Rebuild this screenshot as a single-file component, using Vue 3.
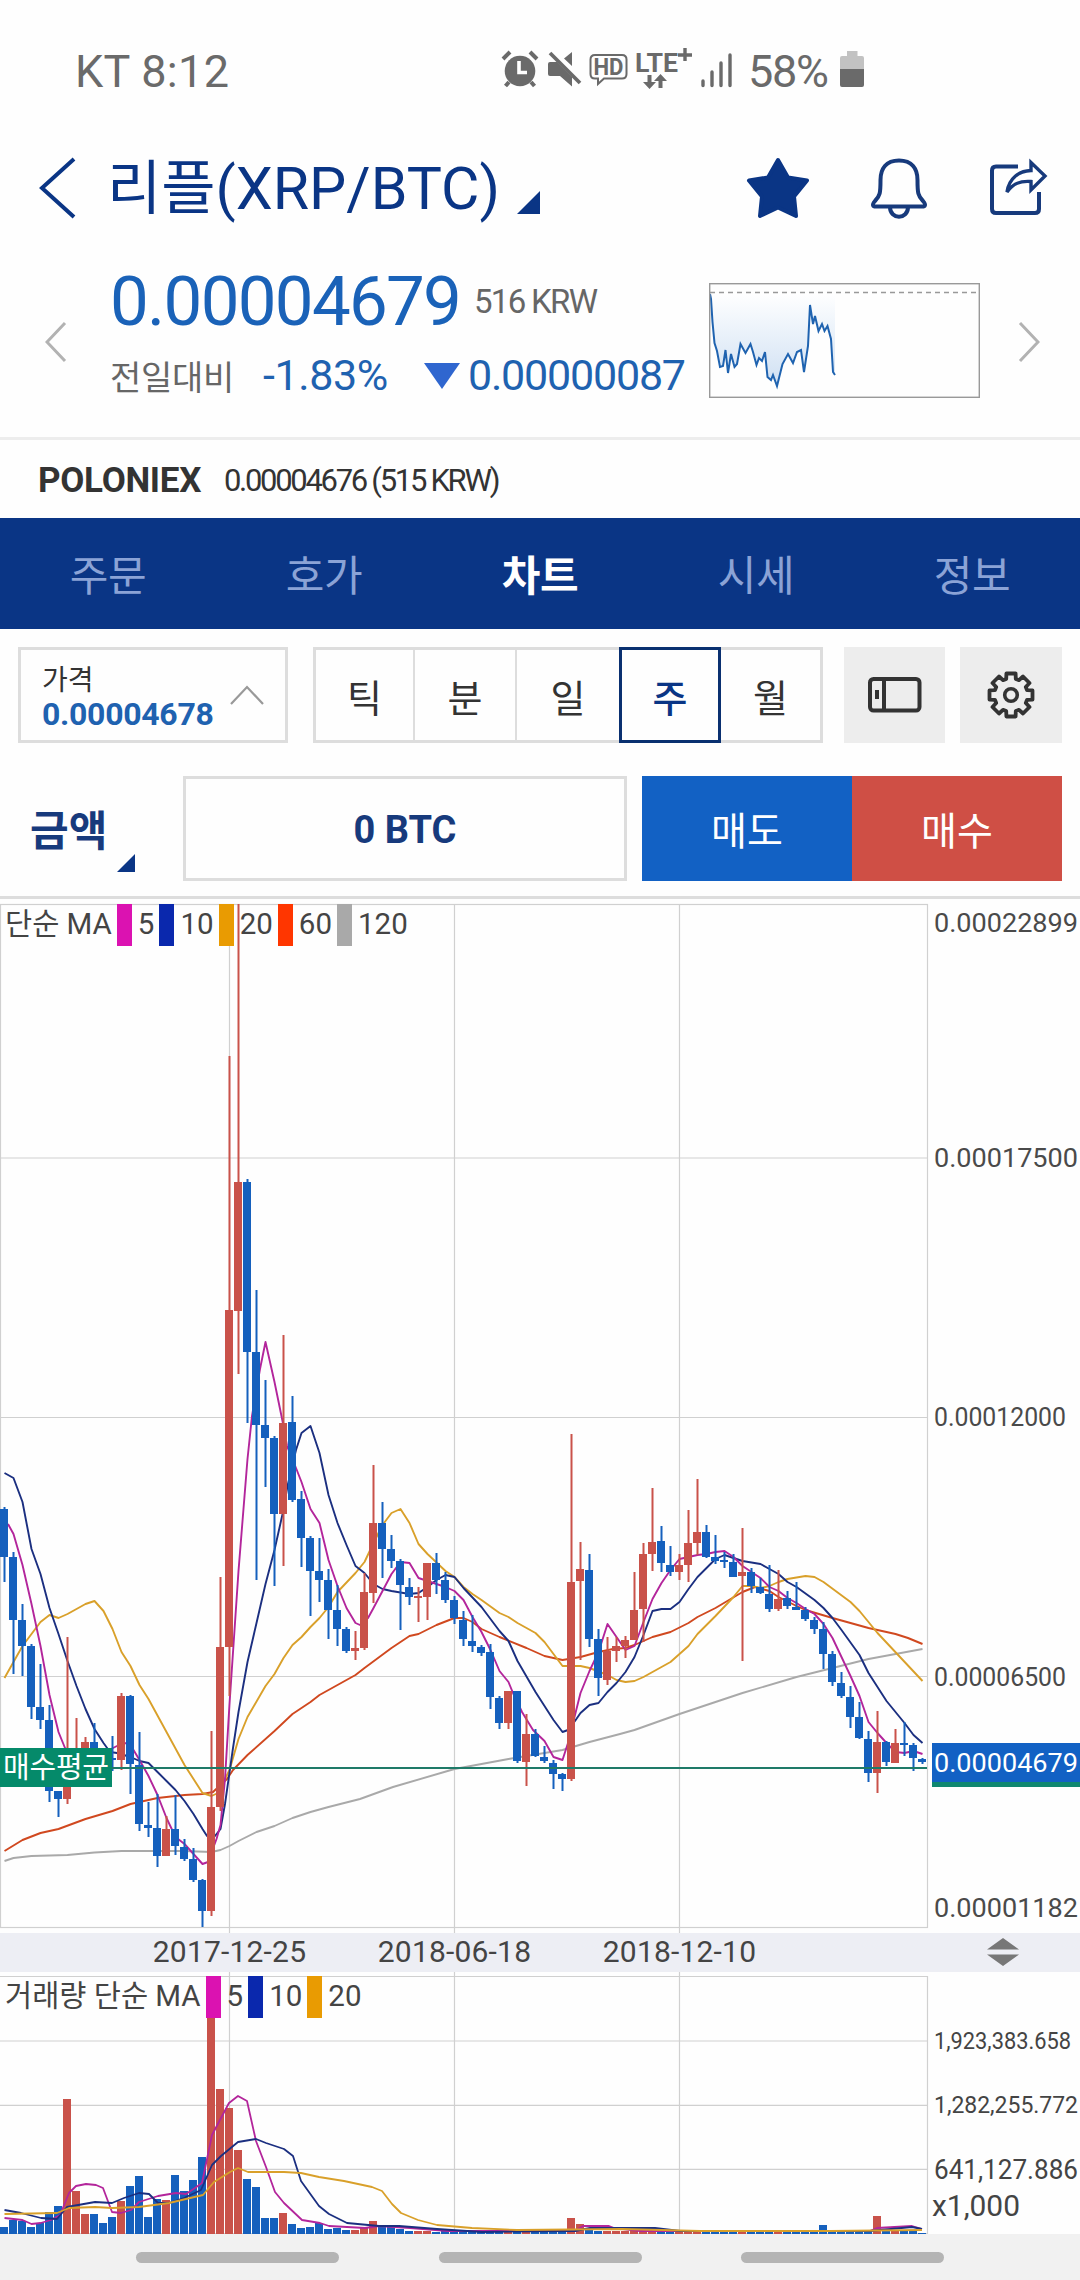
<template>
  <div class="screen">
    <div class="status-bar">
      <span class="status-time">KT 8:12</span>
      <div class="status-right">
        <svg class="ic-alarm" width="38" height="44" viewBox="0 0 38 44">
          <circle cx="19" cy="25" r="15.3" fill="#6a6a6a" />
          <path d="M2 13 L9 6 M29 6 L36 13" stroke="#6a6a6a" stroke-width="4" fill="none" />
          <path d="M8 36 L4.500 40 M30 36 L33.500 40" stroke="#6a6a6a" stroke-width="4" fill="none" />
          <path d="M18 15 V26.500 H26" stroke="#fff" stroke-width="3.600" fill="none" />
        </svg>
        <svg class="ic-mute" width="34" height="44" viewBox="0 0 34 44">
          <path d="M0 18 Q0 16 2 16 H9 L24 31 V40.500 L12 30 H2 Q0 30 0 28 Z M24 6 V20 L16 12.500 Z" fill="#6a6a6a" />
          <path d="M2 7 L32 37" stroke="#6a6a6a" stroke-width="3.800" />
        </svg>
        <svg class="ic-hd" width="40" height="44" viewBox="0 0 40 44">
          <path d="M6 9 H33 Q37.500 9 37.500 13.500 V28 Q37.500 32.500 33 32.500 H15 L9 38 V32.500 H6 Q1.500 32.500 1.500 28 V13.500 Q1.500 9 6 9 Z" fill="none" stroke="#6a6a6a" stroke-width="2" />
          <text x="4.500" y="29" textLength="30" lengthAdjust="spacingAndGlyphs" font-size="23" font-weight="700" fill="#6a6a6a">HD</text>
        </svg>
        <svg class="ic-lte" width="58" height="44" viewBox="0 0 58 44">
          <text x="0" y="25.500" textLength="43" lengthAdjust="spacingAndGlyphs" font-size="26" font-weight="700" fill="#6a6a6a">LTE</text>
          <path d="M43 9 H57 M50 2 V15" stroke="#6a6a6a" stroke-width="3.400" />
          <path d="M12.500 29 H16.500 V36 H21 L14.500 43 L8 36 H12.500 Z M23.500 42 H27.500 V35 H32 L25.500 28 L19 35 H23.500 Z" fill="#6a6a6a" />
        </svg>
        <svg class="ic-signal" width="32" height="44" viewBox="0 0 32 44">
          <path d="M2 35 V39.500 M11 26 V39.500 M20 17 V39.500 M29 9 V39.500" stroke="#6a6a6a" stroke-width="3.400" stroke-linecap="round" />
        </svg>
        <span class="status-battery">58%</span>
        <svg class="ic-battery" width="24" height="44" viewBox="0 0 24 44">
          <path d="M7 5 H17.500 V10 H22 Q24 10 24 12 V23 H0 V12 Q0 10 2 10 H7 Z" fill="#c2c2c2" />
          <path d="M0 23 H24 V39 Q24 41 22 41 H2 Q0 41 0 39 Z" fill="#6a6a6a" />
        </svg>
      </div>
    </div>

    <header class="title-bar">
      <svg class="back" width="40" height="64" viewBox="0 0 40 64">
        <path d="M36 3 L4 32 L36 61" fill="none" stroke="#0a3585" stroke-width="4" />
      </svg>
      <h1 class="title">리플(XRP/BTC)</h1>
      <span class="corner title-corner"></span>
      <div class="title-actions">
        <svg width="64" height="64" viewBox="0 0 64 64">
          <path d="M32 4 L42 21.500 L61 24.500 L48 40.500 L50 60 L32 51.500 L14 60 L16 40.500 L3 24.500 L22 21.500 Z" fill="#0a3585" stroke="#0a3585" stroke-width="4" stroke-linejoin="round" />
        </svg>
        <svg width="60" height="64" viewBox="0 0 60 64">
          <path d="M30 4.500 C17 4.500 11.500 13 11.500 24 C11.500 37 11 40 6 45 C2.500 49 4 50.500 7 50.500 H53 C56 50.500 57.500 49 54 45 C49 40 48.500 37 48.500 24 C48.500 13 43 4.500 30 4.500 Z" fill="none" stroke="#173a7c" stroke-width="4" />
          <path d="M21 51 C21 64 39 64 39 51" fill="none" stroke="#173a7c" stroke-width="4" />
        </svg>
        <svg width="62" height="64" viewBox="0 0 62 64">
          <path d="M30 10.500 H8 Q4 10.500 4 14.500 V53 Q4 57 8 57 H47 Q51 57 51 53 V36" fill="none" stroke="#173a7c" stroke-width="4" />
          <path d="M19 36 C21 22 31 15 43 14.500 V6.500 L57 20 L43 34 V25.500 C32 24.500 25 27.500 19 36 Z" fill="#fff" stroke="#173a7c" stroke-width="3.400" />
        </svg>
      </div>
    </header>

    <section class="summary">
      <svg class="arrow" width="22" height="42" viewBox="0 0 22 42">
        <path d="M20 2 L2 21 L20 40" fill="none" stroke="#b2b2b2" stroke-width="3" />
      </svg>
      <div class="figures">
        <div class="price-row">
          <span class="price">0.00004679</span>
          <span class="krw">516 KRW</span>
        </div>
        <div class="change-row">
          <span class="change-label">전일대비</span>
          <span class="change-rate">-1.83%</span>
          <span class="triangle-down"></span>
          <span class="change-value">0.00000087</span>
        </div>
      </div>
      <svg class="spark" width="271" height="115" viewBox="0 0 271 115">
        <defs>
          <linearGradient id="sparkFill" x1="0" y1="0" x2="0" y2="1">
            <stop offset="0" stop-color="#fff" />
            <stop offset="1" stop-color="#cfe0f3" />
          </linearGradient>
        </defs>
        <polygon :points="'1,10 ' + sparkLine + ' 126,10'" fill="url(#sparkFill)" />
        <polyline :points="sparkLine" fill="none" stroke="#1f63b0" stroke-width="2" />
        <path d="M1 9.500 H270" stroke="#999" stroke-width="1.400" stroke-dasharray="5 4" />
        <rect x="0.700" y="0.700" width="269.600" height="113.600" fill="none" stroke="#999" stroke-width="1.400" />
      </svg>
      <svg class="arrow" width="22" height="42" viewBox="0 0 22 42">
        <path d="M2 2 L20 21 L2 40" fill="none" stroke="#b2b2b2" stroke-width="3" />
      </svg>
    </section>

    <div class="exchange">
      <b class="exchange-name">POLONIEX</b>
      <span class="exchange-price">0.00004676 (515 KRW)</span>
    </div>

    <nav class="tabs">
      <a v-for="tab in tabs" :key="tab" class="tab" :class="{ active: tab === activeTab }" @click="activeTab = tab">{{ tab }}</a>
    </nav>

    <div class="toolbar">
      <div class="price-box">
        <div class="price-box-text">
          <span class="price-box-label">가격</span>
          <b class="price-box-value">0.00004678</b>
        </div>
        <svg width="36" height="22" viewBox="0 0 36 22">
          <path d="M2 20 L18 3 L34 20" fill="none" stroke="#999" stroke-width="2.200" />
        </svg>
      </div>
      <div class="periods">
        <button v-for="p in periods" :key="p" class="period" :class="{ selected: p === period }" @click="period = p">{{ p }}</button>
      </div>
      <button class="tool">
        <svg width="54" height="36" viewBox="0 0 54 36">
          <rect x="2" y="2" width="49.500" height="31.500" rx="3.500" fill="none" stroke="#333" stroke-width="4" />
          <path d="M16 2 V34" stroke="#333" stroke-width="4" />
          <rect x="7" y="13" width="4" height="9" fill="#333" />
        </svg>
      </button>
      <button class="tool">
        <svg width="50" height="50" viewBox="-25 -25 50 50">
          <path :d="gearPath" fill="none" stroke="#333" stroke-width="3.800" stroke-linejoin="round" />
          <circle r="6.300" fill="none" stroke="#333" stroke-width="3.600" />
        </svg>
      </button>
    </div>

    <div class="order-bar">
      <div class="amount">
        <b>금액</b>
        <span class="corner amount-corner"></span>
      </div>
      <div class="amount-input">0 BTC</div>
      <div class="order-buttons">
        <button class="sell">매도</button>
        <button class="buy">매수</button>
      </div>
    </div>

    <div class="price-chart">
      <svg width="1080" height="1033" viewBox="0 0 1080 1033">
        <g stroke="#d0d0d0" stroke-width="1.200" fill="none">
          <rect x="0.500" y="4.500" width="927" height="1023" />
          <path d="M0 258 H927 M0 517.500 H927 M0 776.500 H927" />
          <path d="M229.500 4 V1033 M454.500 4 V1033 M679.500 4 V1033" />
        </g>
        <polyline v-for="line in priceLines" :key="line.color" :points="line.points" :stroke="line.color" fill="none" stroke-width="1.900" stroke-linejoin="round" />
        <g v-for="(c, i) in candles" :key="i" :fill="c[0] ? '#c9524a' : '#1560bd'">
          <rect :x="i * 9 + 3.500" :y="c[1]" width="2" :height="c[4] - c[1]" />
          <rect :x="i * 9" :y="c[2]" width="8" :height="Math.max(c[3] - c[2], 2)" />
        </g>
        <path d="M112 868 H927" stroke="#1e7a68" stroke-width="2" />
        <rect x="0" y="848" width="112" height="39" fill="#058a6a" />
        <text x="3" y="878" font-size="29" textLength="106" fill="#fff">매수평균</text>
        <rect x="932" y="843" width="148" height="44" fill="#0f8770" />
        <rect x="932" y="843" width="148" height="39" fill="#1261c4" />
        <text v-for="l in priceLabels" :key="l.text" x="934" :y="l.y" :textLength="l.w" lengthAdjust="spacingAndGlyphs" font-size="26" :fill="l.current ? '#fff' : '#4a4a4a'">{{ l.text }}</text>
      </svg>
      <div class="legend">
        <span>단순 MA</span>
        <template v-for="m in priceLegend" :key="m.n">
          <i class="swatch" :style="{ background: m.color }"></i><span>{{ m.n }}</span>
        </template>
      </div>
    </div>

    <div class="date-axis">
      <span v-for="d in dates" :key="d" class="date">{{ d }}</span>
      <svg class="resizer" width="32" height="28" viewBox="0 0 32 28">
        <path d="M0 11.500 L16 0 L32 11.500 Z M0 16.500 L16 28 L32 16.500 Z" fill="#777" />
      </svg>
    </div>

    <div class="volume-chart">
      <svg width="1080" height="262" viewBox="0 72 1080 262">
        <g stroke="#d0d0d0" stroke-width="1.200" fill="none">
          <path d="M0 76.500 H927.500 V334 M0 333.500 H927" />
          <path d="M0 141 H927 M0 205.300 H927 M0 269.300 H927" />
          <path d="M229.500 72 V334 M454.500 72 V334 M679.500 72 V334" />
        </g>
        <rect v-for="(v, i) in volumes" :key="i" :x="i * 9" :y="334 - v" width="8" :height="v" :fill="candles[i][0] ? '#c9524a' : '#1560bd'" />
        <polyline v-for="line in volumeLines" :key="line.color" :points="line.points" :stroke="line.color" fill="none" stroke-width="1.800" stroke-linejoin="round" />
        <text x="934" y="149" textLength="137" lengthAdjust="spacingAndGlyphs" font-size="24" fill="#444">1,923,383.658</text>
        <text x="934" y="213" textLength="144" lengthAdjust="spacingAndGlyphs" font-size="24" fill="#444">1,282,255.772</text>
        <text x="934" y="278.500" textLength="144" lengthAdjust="spacingAndGlyphs" font-size="27" fill="#444">641,127.886</text>
        <text x="932" y="315.500" textLength="88" lengthAdjust="spacingAndGlyphs" font-size="29" fill="#444">x1,000</text>
      </svg>
      <div class="legend">
        <span>거래량 단순 MA</span>
        <template v-for="m in volumeLegend" :key="m.n">
          <i class="swatch" :style="{ background: m.color }"></i><span>{{ m.n }}</span>
        </template>
      </div>
    </div>

    <div class="nav-bar">
      <span class="pill"></span>
      <span class="pill"></span>
      <span class="pill"></span>
    </div>
  </div>
</template>

<script setup>
import { ref, computed } from 'vue'

const tabs = ['주문', '호가', '차트', '시세', '정보']
const activeTab = ref('차트')
const periods = ['틱', '분', '일', '주', '월']
const period = ref('주')
const dates = ['2017-12-25', '2018-06-18', '2018-12-10']

const priceLegend = [
  { n: 5, color: '#db12b1' },
  { n: 10, color: '#0a28ad' },
  { n: 20, color: '#e99b02' },
  { n: 60, color: '#ff3600' },
  { n: 120, color: '#a9a9a9' }
]
const volumeLegend = priceLegend.slice(0, 3)

const priceLabels = [
  { text: '0.00022899', y: 932, w: 144 },
  { text: '0.00017500', y: 1167, w: 144 },
  { text: '0.00012000', y: 1426, w: 132 },
  { text: '0.00006500', y: 1685.500, w: 132 },
  { text: '0.00004679', y: 1771.500, w: 144, current: true },
  { text: '0.00001182', y: 1916.500, w: 144 }
].map((l) => ({ ...l, y: l.y - 900 }))

const sparkLine = '1,11 2,16 3.5,39 5.5,60 8,68 11,84 14,83 16.5,67 19,90 22,71 25.5,84 28,81 31.5,61 36.5,70 41.5,61 44,69 47.5,82 50,75 53,78 56,69 58.5,94 62,97 64,92 68,103 73.5,81 79,71 84,80 88,69 92,67 95,89 99,63 101,22 104,41 106,33 109.5,48 113,41 115.5,48 118.5,43 122,56 124,89 126,92'

// [up, high, body top, body bottom, low]
const candles = [
  [0, 607, 609, 657, 682], [0, 652, 657, 720, 774], [0, 704, 720, 746, 776], [0, 744, 746, 807, 819],
  [0, 764, 807, 820, 829], [0, 805, 820, 891, 902], [0, 891, 891, 899, 917], [1, 737, 867, 899, 904],
  [1, 818, 855, 870, 875], [1, 837, 842, 858, 870], [0, 823, 842, 860, 880], [0, 850, 855, 862, 880],
  [0, 836, 858, 860, 871], [1, 793, 796, 860, 870], [0, 795, 796, 864, 894], [0, 832, 865, 924, 931],
  [0, 902, 925, 928, 937], [0, 894, 928, 956, 967], [1, 916, 929, 956, 956], [0, 895, 929, 946, 955],
  [0, 939, 947, 959, 961], [0, 948, 959, 980, 982], [0, 979, 980, 1011, 1027], [1, 831, 907, 1011, 1016],
  [1, 677, 747, 907, 911], [1, 156, 410, 747, 796], [1, 4, 282, 411, 474], [0, 279, 282, 452, 523],
  [0, 390, 452, 525, 680], [0, 480, 525, 538, 587], [0, 536, 538, 614, 686], [1, 435, 523, 614, 666],
  [0, 496, 522, 600, 602], [0, 591, 599, 638, 667], [0, 636, 638, 671, 716], [0, 638, 671, 680, 702],
  [0, 669, 680, 710, 739], [0, 685, 710, 729, 746], [0, 727, 729, 751, 753], [1, 731, 748, 751, 760],
  [1, 673, 692, 748, 750], [1, 565, 623, 693, 703], [0, 602, 623, 649, 678], [0, 635, 649, 661, 668],
  [0, 659, 661, 685, 730], [0, 678, 687, 697, 705], [1, 687, 696, 698, 722], [1, 663, 663, 697, 720],
  [0, 653, 663, 680, 694], [0, 672, 680, 700, 703], [0, 696, 700, 718, 724], [0, 711, 720, 739, 746],
  [0, 715, 741, 746, 752], [0, 745, 747, 753, 756], [0, 744, 752, 797, 809], [0, 796, 798, 823, 829],
  [1, 791, 791, 823, 829], [0, 791, 791, 861, 863], [1, 814, 834, 862, 886], [0, 829, 834, 856, 857],
  [0, 846, 857, 861, 863], [0, 860, 863, 874, 889], [0, 873, 874, 879, 891], [1, 534, 682, 879, 881],
  [1, 642, 669, 681, 760], [0, 654, 670, 739, 747], [0, 729, 739, 778, 796], [1, 737, 751, 780, 785],
  [1, 737, 746, 751, 762], [1, 736, 740, 746, 758], [1, 672, 710, 740, 740], [1, 643, 654, 709, 742],
  [1, 588, 642, 654, 671], [0, 626, 641, 663, 672], [0, 646, 665, 672, 676], [1, 654, 665, 672, 680],
  [1, 610, 643, 665, 682], [1, 579, 632, 643, 655], [0, 625, 632, 657, 658], [0, 635, 657, 661, 664],
  [0, 652, 660, 662, 668], [0, 654, 662, 677, 677], [1, 628, 672, 676, 761], [0, 668, 672, 686, 693],
  [0, 678, 687, 693, 694], [0, 665, 694, 709, 712], [1, 670, 699, 709, 711], [0, 691, 698, 706, 709],
  [0, 682, 707, 710, 710], [0, 707, 710, 719, 721], [0, 717, 720, 729, 734], [0, 722, 729, 754, 769],
  [0, 751, 754, 782, 786], [0, 772, 783, 796, 798], [0, 786, 797, 817, 828], [0, 802, 817, 838, 839],
  [0, 831, 839, 873, 882], [1, 811, 842, 873, 893], [0, 841, 842, 862, 866], [1, 829, 843, 863, 863],
  [0, 822, 843, 845, 856], [0, 843, 845, 858, 871], [0, 858, 859, 862, 864]
]

const priceLines = [
  { color: '#a9a9a9', points: '4.5,961 13.5,958 31.5,956 67.5,955 94.5,952.5 121.5,951 183,951 211.5,952 220.5,950 229.5,946 238.5,941 256.5,932 274.5,926 292.5,918 310.5,912 328.5,907 360,899 393,887 454.5,869 508.5,859 562.5,850 589.5,842 620,834 634.5,830 679.5,814 742.5,793 796.5,777 832.5,768 868.5,759 922.5,749' },
  { color: '#d0481f', points: '4.5,951 22.5,940 40.5,933 58.5,929 85.5,919 112.5,911 130.5,904 157.5,898 184.5,895 202.5,894 213,892 227,879 233,870 247.5,855 274.5,831 292.5,814 310.5,802 319.5,795 355.5,775 364.5,768 391.5,748 409.5,736 418.5,734 436.5,725 454.5,718 463.5,718 472.5,722 481.5,729 499.5,737 526.5,748 544.5,756 562.5,760 580.5,757 598.5,752 613,749 625.5,748 634.5,745 652.5,737 670.5,732 688.5,723 697.5,717 715.5,708 742.5,692 755,687 769.5,691 778.5,697 796.5,706 805.5,710 832.5,718 868.5,728 895.5,734 908,738 922.5,744' },
  { color: '#d9a02a', points: '4.5,778 13.5,762 22.5,746 31.5,734 40.5,722 49.5,715 58.5,718 67.5,714 85.5,704 94.5,701 103.5,711 112.5,729 121.5,752 130.5,766 139.5,785 148.5,799 166.5,832 184.5,865 202.5,893 211.5,896 218,893 225,879 229.5,870 238.5,839 247.5,817 265.5,786 274.5,774 283.5,758 292.5,745 301.5,737 310.5,727 319.5,718 328.5,707 337.5,692 355.5,673 364.5,662 373.5,643 382.5,625 391.5,613 400.5,609 409.5,623 418.5,644 427.5,654 445.5,671 454.5,677 463.5,687 472.5,694 481.5,700 499.5,713 508.5,717 517.5,723 526.5,728 535.5,733 544.5,742 553.5,754 562.5,766 580.5,766 589.5,768 607.5,775 616.5,780 625.5,782 634.5,781 643.5,777 661.5,767 670.5,762 688.5,746 697.5,734 715.5,716 733.5,697 742.5,686 751.5,686 760.5,688 769.5,686 778.5,682 787.5,679 805.5,676 814.5,677 823.5,682 850.5,702 859.5,711 877.5,733 922.5,781' },
  { color: '#1b2f80', points: '4.5,573 13.5,578 22.5,602 31.5,649 40.5,674 49.5,708 58.5,734 67.5,761 76.5,786 85.5,809 94.5,829 103.5,843 110,852 117,853 130.5,857 139.5,861 148.5,863 157.5,872 166.5,881 175.5,890 184.5,901 193.5,914 202.5,929 207,936 215,936 220.5,929 225,904 233,848 238.5,812 247.5,762 256.5,723 265.5,684 274.5,650 283,612 287.5,586 296,550 301.5,533 310.5,526 319.5,553 328.5,595 337.5,623 346.5,645 355.5,666 364.5,673 373.5,684 382.5,689 391.5,691 409.5,694 418.5,693 427.5,687 436.5,680 445.5,675 454.5,677 463.5,688 481.5,707 499.5,731 508.5,741 517.5,761 535.5,792 553.5,820 562.5,832 568,830 575,821 580.5,813 589.5,805 598.5,803 607.5,792 616.5,783 625.5,772 634.5,757 643.5,735 652.5,711 661.5,709 670.5,709 679.5,702 688.5,689 697.5,677 706.5,668 715.5,659 724.5,655 733.5,658 742.5,661 760.5,664 769.5,669 778.5,674 787.5,682 796.5,687 814.5,700 823.5,708 832.5,718 841.5,730 859.5,755 868.5,773 886.5,801 904.5,823 913.5,835 922.5,843' },
  { color: '#b3259b', points: '8,624 13.5,634 22.5,665 31.5,704 40.5,746 49.5,795 58.5,832 65,848 90,862 113,848 121,844 127,843 130.5,845 139.5,860 148.5,876 157.5,895 166.5,918 175.5,937 184.5,944 193.5,954 202.5,964 208,962 216.5,939 220.5,925 225,879 229.5,804 238.5,671 247.5,559 252,516 260,469 265.5,442 274.5,482 282.5,521 287,546 296,568 301.5,582 310.5,609 319.5,623 328.5,660 337.5,686 346.5,708 355.5,723 360,725 368,718 373.5,708 382.5,691 391.5,674 400.5,662 409.5,663 418.5,678 427.5,681 436.5,684 445.5,687 454.5,691 463.5,700 472.5,717 481.5,732 490.5,750 499.5,771 508.5,782 513,793 522,812 533,830 544.5,841 553.5,857 562.5,860 568,843 575,815 580.5,793 589.5,771 598.5,752 607.5,724 616.5,737 625.5,750 634.5,746 643.5,722 652.5,699 661.5,683 670.5,670 679.5,659 688.5,657 697.5,655 706.5,654 715.5,652 724.5,651 733.5,657 742.5,666 751.5,672 760.5,678 769.5,687 778.5,691 787.5,698 796.5,703 805.5,709 814.5,714 823.5,724 832.5,738 841.5,757 850.5,776 859.5,796 868.5,822 877.5,833 886.5,843 895.5,852 904.5,853 913.5,851 922.5,854' }
]

const volumes = [
  7, 14, 13, 7, 11, 22, 28, 135, 43, 20, 20, 11, 17, 33, 48, 58, 17, 35, 34, 59, 43, 54, 77, 240, 145, 126, 84, 55, 47, 16, 16,
  21, 10, 6, 7, 11, 5, 6, 4, 4, 6, 13, 7, 7, 5, 3, 3, 3, 2, 3, 2, 2, 2, 2, 2, 2, 3, 3, 3, 3, 2, 2, 2,
  16, 10, 4, 3, 3, 3, 3, 4, 4, 4, 3, 3, 3, 3, 3, 3, 3, 2, 2, 2, 2, 2, 2, 2, 2, 2, 3, 3, 9, 3, 3, 3, 3, 3, 18, 4, 4, 3, 3, 1
]

const volumeLines = [
  { color: '#b3259b', points: '4.5,318 22.5,320 31.5,324 40.5,323 51,320 60,315 69,293 76,286 86,284 96,285 103,288 112,312 121,313 131,310 139,302 158,296 176,293 186,294 195,288 202,283 212,235 221,218 229,203 238,196 247,201 256,241 266,267 275,292 284,303 302,320 320,323 329,326 365,328 379,326 410,328 448,331 575,331 583,326 609,326 614,328 640,331 870,331 877,328 912,326 922,329' },
  { color: '#1b2f80', points: '4.5,310 21,313 41,318 57,319 67,307 95,302 112,303 124,298 139,293 149,294 158,303 169,303 184,298 201,290 212,265 221,256 238,242 256,239 266,243 284,249 293,256 301,281 319,306 329,314 347,323 379,326 399,326 437,329 482,332 575,331 590,328 655,328 680,331 870,331 912,327 922,329' },
  { color: '#d9a02a', points: '4.5,314 57,313 69,308 95,307 112,308 139,307 169,303 203,295 214,282 230,272 238,268 248,272 284,272 301,273 319,277 344,281 372,287 382,291 392,304 401,313 418,320 437,325 472,328 517,330 622,329 700,331 830,331 922,330' }
]

const gearPath = computed(() => {
  const points = []
  for (let i = 0; i < 8; i++) {
    const a = (i * Math.PI) / 4
    for (const [r, d] of [[16.8, -0.29], [22, -0.21], [22, 0.21], [16.8, 0.29]]) {
      points.push(`${(r * Math.cos(a + d)).toFixed(1)} ${(r * Math.sin(a + d)).toFixed(1)}`)
    }
  }
  return `M${points.join(' L')} Z`
})
</script>

<style>
body {
  margin: 0;
  background: #fefefe;
}
</style>

<style scoped>
.screen {
  width: 1080px;
  height: 2280px;
  display: flex;
  flex-direction: column;
  overflow: hidden;
  background: #fefefe;
  font-family: Roboto, 'Noto Sans CJK KR', sans-serif;
  color: #333;
}

.screen > * {
  flex-shrink: 0;
  box-sizing: border-box;
}

svg {
  display: block;
  flex-shrink: 0;
}

button {
  font-family: inherit;
  border: none;
  padding: 0;
  margin: 0;
}

.status-bar {
  height: 142px;
  padding: 0 216px 0 75px;
  display: flex;
  align-items: center;
  justify-content: space-between;
  font-size: 45px;
  color: #6a6a6a;
}

.status-time {
  letter-spacing: 0.3px;
}

.status-right {
  display: flex;
  align-items: center;
  margin-top: -6px;
}

.ic-alarm {
  margin-right: 9px;
}

.ic-mute {
  margin-right: 7px;
}

.ic-hd {
  margin-right: 6px;
}

.ic-lte {
  margin-right: 8px;
}

.ic-signal {
  margin-right: 15px;
}

.status-battery {
  width: 92px;
  margin-top: 6px;
  letter-spacing: -1.3px;
}

.title-bar {
  height: 94px;
  padding: 0 30px 0 38px;
  display: flex;
  align-items: center;
}

.back {
  margin-top: -2px;
}

.title {
  margin: 0 0 0 29px;
  font-size: 59px;
  font-weight: 400;
  line-height: 80px;
  letter-spacing: 0;
  color: #0a3585;
}

.corner {
  width: 0;
  height: 0;
  border-style: solid;
  border-color: transparent transparent #0a3585 transparent;
}

.title-corner {
  border-width: 0 0 23px 23px;
  margin: 26px 0 0 17px;
}

.title-actions {
  display: flex;
  gap: 59px;
  margin: -2px 0 0 auto;
}

.summary {
  height: 204px;
  padding: 24px 40px 0 45px;
  display: flex;
  align-items: flex-start;
  border-bottom: 3px solid #ededed;
}

.arrow {
  margin-top: 61px;
}

.figures {
  width: 600px;
  margin-left: 43px;
}

.price-row {
  height: 82px;
  display: flex;
  align-items: center;
}

.price {
  width: 364px;
  font-size: 69px;
  letter-spacing: -1.7px;
  color: #1a62b8;
}

.krw {
  font-size: 33px;
  letter-spacing: -1.7px;
  color: #666;
}

.change-row {
  height: 66px;
  display: flex;
  align-items: center;
  font-size: 43px;
  color: #1f62b0;
}

.change-label {
  width: 153px;
  font-size: 34px;
  letter-spacing: -0.3px;
  color: #666;
  white-space: nowrap;
}

.change-rate {
  width: 161px;
  letter-spacing: -0.4px;
}

.triangle-down {
  border-left: 18px solid transparent;
  border-right: 18px solid transparent;
  border-top: 26px solid #2f66cf;
  margin: 2px 8px 0 0;
}

.change-value {
  letter-spacing: -1.2px;
}

.spark {
  margin: 23px 0 0 -1px;
}

.spark + .arrow {
  margin-left: auto;
}

.exchange {
  height: 78px;
  padding: 3px 0 0 38px;
  display: flex;
  align-items: center;
}

.exchange-name {
  width: 186px;
  font-size: 35px;
  letter-spacing: -0.3px;
}

.exchange-price {
  font-size: 31px;
  letter-spacing: -2.3px;
}

.tabs {
  height: 111px;
  padding-bottom: 3px;
  display: flex;
  background: #0a3585;
}

.tab {
  flex: 1;
  display: flex;
  align-items: center;
  justify-content: center;
  font-size: 42px;
  letter-spacing: -0.5px;
  color: #8ba3d6;
}

.tab.active {
  font-weight: 700;
  color: #fff;
}

.toolbar {
  height: 132px;
  padding: 18px 18px 0;
  display: flex;
  align-items: flex-start;
}

.price-box {
  width: 270px;
  height: 96px;
  box-sizing: border-box;
  border: 3px solid #ddd;
  padding: 0 20px 0 21px;
  display: flex;
  align-items: center;
  justify-content: space-between;
}

.price-box-text {
  display: flex;
  flex-direction: column;
  padding-top: 4px;
}

.price-box-label {
  font-size: 28px;
  line-height: 34px;
}

.price-box-value {
  font-size: 32px;
  line-height: 32px;
  letter-spacing: -0.3px;
  color: #1f62b0;
}

.periods {
  width: 510px;
  height: 96px;
  margin: 0 21px 0 25px;
  display: flex;
}

.period {
  flex: 0 0 102px;
  box-sizing: border-box;
  font-size: 38px;
  background: transparent;
  color: #333;
  border: 3px solid #ddd;
  border-left-width: 0;
  border-right-width: 2px;
}

.period:first-child {
  border-left-width: 3px;
}

.period:nth-child(3) {
  border-right-width: 0;
}

.period:last-child {
  border-right-width: 3px;
}

.period.selected {
  border: 3px solid #0a3070;
  font-weight: 500;
  color: #0a3585;
}

.tool {
  width: 101px;
  height: 96px;
  display: flex;
  align-items: center;
  justify-content: center;
  background: #ededed;
}

.tool + .tool {
  width: 102px;
  margin-left: 15px;
}

.order-bar {
  height: 138px;
  padding: 15px 18px 0 30px;
  display: flex;
  align-items: flex-start;
  border-bottom: 3px solid #ddd;
}

.amount {
  width: 153px;
  height: 105px;
  display: flex;
  align-items: center;
  font-size: 42px;
  color: #173a7c;
}

.amount b {
  margin-top: -3px;
}

.amount-corner {
  border-width: 0 0 18px 18px;
  margin: 69px 0 0 10px;
}

.amount-input {
  width: 444px;
  height: 105px;
  padding-top: 2px;
  box-sizing: border-box;
  border: 3px solid #ddd;
  display: flex;
  align-items: center;
  justify-content: center;
  font-size: 38px;
  font-weight: 700;
  color: #173a7c;
}

.order-buttons {
  display: flex;
  margin-left: 15px;
}

.sell,
.buy {
  width: 210px;
  height: 105px;
  padding-bottom: 2px;
  font-size: 39px;
  font-weight: 400;
  color: #fff;
}

.sell {
  background: #1261c4;
}

.buy {
  background: #cf4f45;
}

.price-chart {
  position: relative;
  height: 1033px;
  margin-top: 1px;
}

.legend {
  position: absolute;
  left: 5px;
  top: 4px;
  height: 42px;
  display: flex;
  align-items: center;
  font-size: 29.5px;
  line-height: 38px;
  color: #444;
  white-space: nowrap;
}

.legend span {
  margin-top: -3px;
}

.swatch {
  width: 15px;
  height: 42px;
  margin: 0 6px 0 5px;
}

.date-axis {
  height: 39px;
  padding: 0 61px 2px 117px;
  display: flex;
  align-items: center;
  background: #edeef4;
}

.date {
  width: 225px;
  text-align: center;
  font-size: 30px;
  letter-spacing: 0.2px;
  color: #444;
}

.resizer {
  margin-left: auto;
}

.volume-chart {
  position: relative;
  height: 262px;
}

.nav-bar {
  height: 46px;
  padding: 18px 136px 0;
  display: flex;
  justify-content: space-between;
  background: #f1f1f1;
}

.pill {
  width: 203px;
  height: 11px;
  border-radius: 6px;
  background: #b4b4b4;
}
</style>
